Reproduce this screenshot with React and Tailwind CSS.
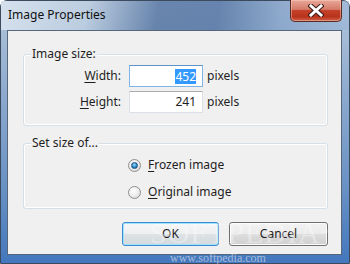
const ui = "font-['Segoe_UI','Noto_Sans',sans-serif]";

function CloseButton() {
  return (
    <div className="mt-[-1px] mr-[7px] flex h-[22px] w-[52px] items-center justify-center rounded-b-[5px] border border-t-0 border-[#5a2a24] bg-[linear-gradient(to_bottom,#e8a899_0%,#d57a68_45%,#c4412a_50%,#b9321b_80%,#d0644a_100%)] shadow-[inset_0_0_0_1px_rgba(255,210,200,0.45)]">
      <svg width="16" height="13" viewBox="0 0 16 13">
        <path d="M3 2 L13 11 M13 2 L3 11" stroke="#3b1a16" strokeWidth="5" strokeLinecap="square" />
        <path d="M3 2 L13 11 M13 2 L3 11" stroke="#ffffff" strokeWidth="3" strokeLinecap="square" />
      </svg>
    </div>
  );
}

function GroupBox({ label, className, children }) {
  return (
    <div className={"relative rounded-[3px] border border-[#d5dfe5] shadow-[inset_0_0_0_1px_#ffffff] " + className}>
      <span className="absolute left-[7px] top-[-9px] bg-[#f0f0f0] px-[1px] leading-[16px] text-[#1e1e1e]">
        {label}
      </span>
      {children}
    </div>
  );
}

function Radio({ checked, accel, rest }) {
  return (
    <div className="flex h-[20px] items-center">
      <span className="flex h-[13px] w-[13px] items-center justify-center rounded-full border border-[#8e8f8f] bg-[radial-gradient(circle_at_40%_35%,#ffffff_0%,#eaeaea_55%,#cfcfcf_100%)]">
        {checked && (
          <span className="h-[7px] w-[7px] rounded-full border border-[#1c5180] bg-[radial-gradient(circle_at_45%_35%,#9fdcf8_0%,#2a8ccc_55%,#0d4f86_100%)]" />
        )}
      </span>
      <span className="ml-[7px] text-[#1e1e1e]">
        <span className="underline underline-offset-2">{accel}</span>
        {rest}
      </span>
    </div>
  );
}

export default function App() {
  return (
    <div className={"relative h-[264px] w-[350px] overflow-hidden text-[12px] " + ui}>
      <div className="flex h-full flex-col rounded-t-[7px] border border-[#3b4a5c] bg-[linear-gradient(to_bottom,#b4c6db_0%,#93aed0_30%,#6a92c4_70%,#4477bd_100%)]">
        <div className="flex h-[29px] items-start justify-between bg-[linear-gradient(100deg,rgba(215,226,238,0.95)_0%,rgba(190,207,225,0.8)_25%,rgba(80,112,158,0.75)_45%,rgba(70,105,155,0.7)_62%,rgba(110,145,190,0.5)_80%,rgba(150,180,215,0.5)_100%)]">
          <span className="ml-[7px] mt-[6px] text-[12px] leading-[16px] text-[#101010]">Image Properties</span>
          <CloseButton />
        </div>
        <div className="ml-[6px] mr-[7px] flex h-[225px] flex-col border border-[#56677b] bg-[#f0f0f0]">
          <GroupBox label="Image size:" className="ml-[15px] mr-[13px] mt-[23px] h-[72px]">
            <div className="mt-[10px] grid grid-cols-[97px_74px_auto] items-center gap-x-[8px] gap-y-[4px]">
              <span className="text-right text-[#1e1e1e]">
                <span className="underline underline-offset-2">W</span>idth:
              </span>
              <div className="flex h-[22px] items-center justify-end border border-[#7fb5e4] border-t-[#5d93c8] bg-white pr-[6px]">
                <span className="bg-[#3399ff] leading-[15px] text-white">452</span>
              </div>
              <span className="ml-[-4px] text-[#1e1e1e]">pixels</span>
              <span className="text-right text-[#1e1e1e]">
                <span className="underline underline-offset-2">H</span>eight:
              </span>
              <div className="flex h-[22px] items-center justify-end border border-[#dbdfe6] border-t-[#abadb3] bg-white pr-[6px] text-[#1e1e1e]">
                241
              </div>
              <span className="ml-[-4px] text-[#1e1e1e]">pixels</span>
            </div>
          </GroupBox>
          <GroupBox label="Set size of..." className="ml-[15px] mr-[13px] mt-[17px] h-[66px]">
            <div className="ml-[104px] mt-[11px] flex flex-col gap-[7px]">
              <Radio checked accel="F" rest="rozen image" />
              <Radio accel="O" rest="riginal image" />
            </div>
          </GroupBox>
          <div className="mr-[13px] mt-[13px] flex justify-end gap-[10px]">
            <button className="flex h-[24px] w-[97px] items-center justify-center rounded-[3px] border border-[#3c8ad0] bg-[linear-gradient(to_bottom,#f4f6f7_0%,#edeff0_48%,#dde2e5_52%,#d3d9dd_100%)] text-[#1e1e1e] shadow-[inset_0_0_0_1px_#9fe4fb]">
              OK
            </button>
            <button className="flex h-[24px] w-[99px] items-center justify-center rounded-[3px] border border-[#707070] bg-[linear-gradient(to_bottom,#f2f2f2_0%,#ebebeb_48%,#dddddd_52%,#cfcfcf_100%)] text-[#1e1e1e] shadow-[inset_0_0_0_1px_#fcfcfc]">
              Cancel
            </button>
          </div>
        </div>
      </div>
      <div className="pointer-events-none absolute left-[150px] top-[216px] font-['Liberation_Serif',serif] text-[30px] leading-[34px] tracking-[1px] text-white/35">
        SOFTPEDIA<span className="align-top text-[8px]">™</span>
      </div>
      <div className="pointer-events-none absolute left-[170px] top-[252px] font-['Liberation_Serif',serif] text-[12px] leading-[12px] text-white/50">
        www.softpedia.com
      </div>
    </div>
  );
}
